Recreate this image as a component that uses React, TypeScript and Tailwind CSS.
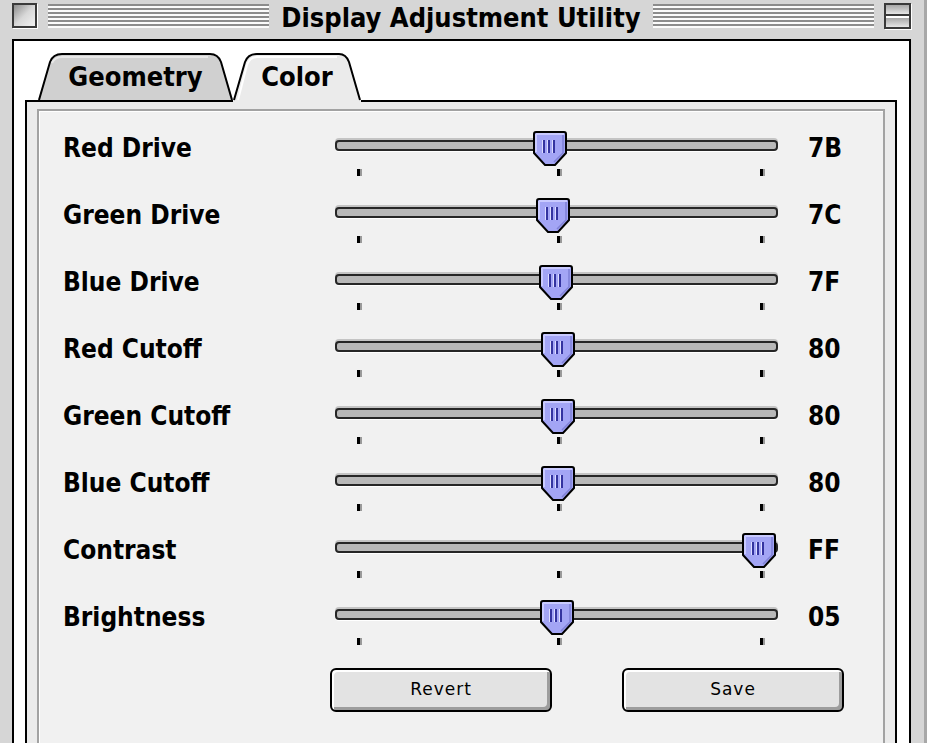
import React from "react";

const BOLD =
  "font-['DejaVu_Sans_Condensed','Liberation_Sans_Narrow','DejaVu_Sans',sans-serif] font-bold font-stretch-condensed text-black";

const ROWS = [
  { label: "Red Drive", value: "7B", pos: 215 },
  { label: "Green Drive", value: "7C", pos: 218 },
  { label: "Blue Drive", value: "7F", pos: 221 },
  { label: "Red Cutoff", value: "80", pos: 223 },
  { label: "Green Cutoff", value: "80", pos: 223 },
  { label: "Blue Cutoff", value: "80", pos: 223 },
  { label: "Contrast", value: "FF", pos: 424 },
  { label: "Brightness", value: "05", pos: 222 },
];

const Stripes = () => (
  <div className="flex-1 h-[24px] mt-[1px] bg-[repeating-linear-gradient(to_bottom,#8c8c8c_0px,#8c8c8c_2px,#fbfbfb_2px,#fbfbfb_4px)]" />
);

const Thumb = ({ left }: { left: number }) => (
  <svg
    className="absolute top-0"
    style={{ left }}
    width="34"
    height="36"
    viewBox="0 0 34 36"
  >
    <path
      d="M3 1 H31 Q33 1 33 3 V22 L22 34 H12 L1 22 V3 Q1 1 3 1 Z"
      fill="#a3a5f5"
      stroke="#000"
      strokeWidth="2"
    />
    <path d="M3 3 H31 M3 3 V21" stroke="#c9caff" strokeWidth="2" fill="none" />
    <path d="M30 4 V22 L21 31" stroke="#7f80d6" strokeWidth="1.5" fill="none" />
    <rect x="9" y="9" width="1" height="13" fill="#dcdcff" />
    <rect x="10" y="9" width="2" height="13" fill="#3434a0" />
    <rect x="14" y="9" width="1" height="13" fill="#dcdcff" />
    <rect x="15" y="9" width="2" height="13" fill="#3434a0" />
    <rect x="19" y="9" width="1" height="13" fill="#dcdcff" />
    <rect x="20" y="9" width="2" height="13" fill="#3434a0" />
  </svg>
);

const Tick = ({ className }: { className: string }) => (
  <div className={`w-[5px] h-[7px] bg-black border-r-2 border-[#9a9a9a] ${className}`} />
);

const SliderRow = ({ label, value, pos }: { label: string; value: string; pos: number }) => (
  <div className="flex h-[67px]">
    <div className={`w-[272px] pt-[4px] text-[26px] leading-[26px] ${BOLD}`}>{label}</div>
    <div className="relative w-[443px] flex flex-col">
      <div className="mt-[9px] h-[11px] rounded-[4px] border-2 border-[#262626] bg-[#b8b8b8] shadow-[0_-2px_0_#c4c4c4,0_1px_0_#ffffff]" />
      <div className="flex mt-[18px]">
        <Tick className="ml-[22px]" />
        <Tick className="ml-[195px]" />
        <Tick className="ml-[198px]" />
      </div>
      <Thumb left={pos - 17} />
    </div>
    <div className={`ml-[30px] pt-[4px] text-[26px] leading-[26px] ${BOLD}`}>{value}</div>
  </div>
);

const Button = ({ text }: { text: string }) => (
  <button className="w-[222px] h-[44px] rounded-[6px] border-2 border-black bg-[#e3e3e3] shadow-[inset_2px_2px_0_#ffffff,inset_-3px_-3px_0_#9d9d9d] font-['DejaVu_Sans',sans-serif] text-[17px] tracking-[1px] text-black">
    {text}
  </button>
);

export default function App() {
  return (
    <div className="w-[942px] h-[756px] bg-white">
      <div className="w-[927px] h-[743px] overflow-hidden flex flex-col bg-[#d6d6d6] pl-[12px] pr-[13px] border-r-[3px] border-[#a8a8a8]">
        {/* title bar */}
        <div className="h-[39px] flex items-start pt-[3px]">
          <div className="w-[25px] h-[25px] border-2 border-[#3a3a3a] bg-gradient-to-br from-[#8e8e8e] via-[#d8d8d8] to-[#f2f2f2] shadow-[1px_1px_0_#ffffff]" />
          <div className="w-[11px]" />
          <Stripes />
          <div className={`px-[12px] h-[30px] text-[27px] leading-[30px] whitespace-nowrap ${BOLD}`}>
            Display Adjustment Utility
          </div>
          <Stripes />
          <div className="ml-[10px] w-[27px] h-[26px] border-2 border-[#3a3a3a] flex flex-col shadow-[1px_1px_0_#ffffff]">
            <div className="flex-1 bg-gradient-to-b from-[#a8a8a8] to-[#e6e6e6]" />
            <div className="h-[2px] bg-[#3a3a3a]" />
            <div className="h-[2px] bg-white" />
            <div className="flex-1 bg-gradient-to-b from-[#a8a8a8] to-[#e6e6e6]" />
          </div>
        </div>

        {/* content */}
        <div className="flex-1 flex flex-col bg-white border-2 border-b-0 border-black pt-[12px] pl-[11px] pr-[12px]">
          {/* tabs */}
          <div className="relative z-10 flex h-[49px] -mb-[2px] ml-[13px]">
            <div className="relative w-[195px] h-[47px] flex items-center justify-center">
              <svg className="absolute inset-0" width="195" height="47" viewBox="0 0 195 47">
                <path d="M0 47 L12 9 Q15 1 24 1 H172 Q180 1 183 9 L195 47 Z" fill="#d0d0d0" />
                <path d="M1 47 L12 9 Q15 1 24 1 H172 Q180 1 183 9 L194 47" fill="none" stroke="#000" strokeWidth="2" />
                <path d="M14 10 Q17 4 24 4 H170" fill="none" stroke="#e8e8e8" strokeWidth="2" />
              </svg>
              <span className={`relative text-[27px] leading-[30px] ${BOLD}`}>Geometry</span>
            </div>
            <div className="relative w-[128px] h-[49px] flex items-center justify-center pb-[2px]">
              <svg className="absolute inset-0" width="128" height="49" viewBox="0 0 128 49">
                <path d="M0 49 V47 L12 9 Q15 1 24 1 H106 Q113 1 116 9 L128 47 V49 Z" fill="#ebebeb" />
                <path d="M1 47 L12 9 Q15 1 24 1 H106 Q113 1 116 9 L127 47" fill="none" stroke="#000" strokeWidth="2" />
                <path d="M5 47 L14 12 Q17 4 24 4 H104" fill="none" stroke="#ffffff" strokeWidth="2" />
              </svg>
              <span className={`relative text-[27px] leading-[30px] ${BOLD}`}>Color</span>
            </div>
          </div>

          {/* tab pane */}
          <div className="flex-1 flex flex-col border-2 border-b-0 border-black bg-[#ebebeb] pt-[7px] px-[10px]">
            <div className="flex-1 flex flex-col border-2 border-b-0 border-[#a2a2a2] bg-[#f1f1f1] shadow-[inset_1px_1px_0_#ffffff] pl-[24px] pt-[20px]">
              {ROWS.map((row) => (
                <SliderRow key={row.label} {...row} />
              ))}
              <div className="flex ml-[267px] mt-[1px] gap-[70px]">
                <Button text="Revert" />
                <Button text="Save" />
              </div>
            </div>
          </div>
        </div>
      </div>
    </div>
  );
}
